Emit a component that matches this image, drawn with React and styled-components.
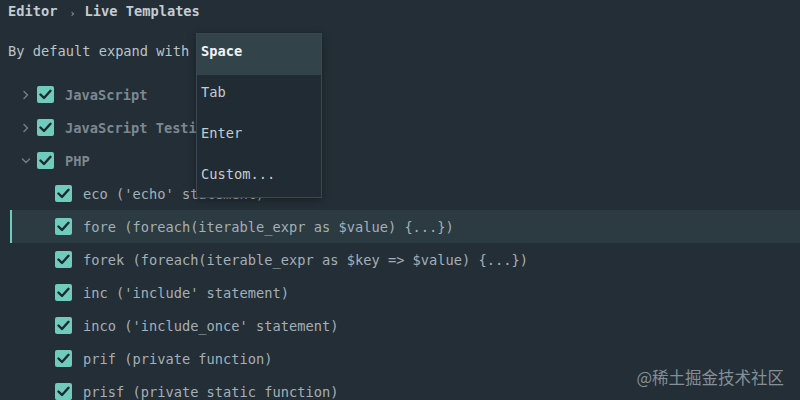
import React from "react";
import styled, { createGlobalStyle } from "styled-components";

const GlobalStyle = createGlobalStyle`
  html, body {
    margin: 0;
    padding: 0;
    background: #232e36;
  }
  body {
    font-family: "DejaVu Sans Mono", "Liberation Mono", monospace;
    font-size: 13.7px;
  }
`;

const Page = styled.div`
  position: relative;
  width: 800px;
  height: 400px;
  overflow: hidden;
  background: #232e36;
  color: #a9b3ba;
`;

const Breadcrumb = styled.div`
  display: flex;
  align-items: center;
  height: 22px;
  padding-left: 8px;
  font-weight: bold;
  color: #c3ccd2;
`;

const Sep = styled.span`
  margin: 0 9px 0 12px;
  font-size: 10px;
  color: #8d99a1;
  position: relative;
  top: 2px;
`;

const ExpandLine = styled.div`
  display: flex;
  align-items: center;
  height: 24px;
  margin-top: 17px;
  padding-left: 8px;
  color: #b9c3c9;
`;

const Tree = styled.div`
  margin-top: 15px;
`;

const Row = styled.div`
  display: flex;
  align-items: center;
  height: 33px;
  box-sizing: border-box;
  margin-left: 10px;
  padding-left: ${(p) => (p.$child ? 43 : 5)}px;
  border-left: 2px solid ${(p) => (p.$selected ? "#6fcbbb" : "transparent")};
  background: ${(p) => (p.$selected ? "#2c3a41" : "transparent")};
`;

const Chevron = styled.span`
  display: flex;
  width: 18px;
  justify-content: center;
  margin-right: 2px;
`;

const Box = styled.span`
  display: flex;
  align-items: center;
  justify-content: center;
  width: 17px;
  height: 17px;
  border-radius: 2px;
  background: #6fcbbb;
  margin-right: 11px;
`;

const Label = styled.span`
  white-space: pre;
  color: ${(p) => (p.$group ? "#7b8892" : "#a5afb6")};
  font-weight: ${(p) => (p.$group ? "bold" : "normal")};
`;

const Menu = styled.div`
  position: absolute;
  left: 196px;
  top: 33px;
  width: 126px;
  height: 165px;
  box-sizing: border-box;
  background: #202b33;
  border: 1px solid #3a4650;
  box-shadow: 0 2px 8px rgba(0, 0, 0, 0.3);
`;

const MenuItem = styled.div`
  height: 41px;
  box-sizing: border-box;
  display: flex;
  align-items: center;
  padding: 0 0 7px 4px;
  background: ${(p) => (p.$active ? "#33434a" : "transparent")};
  color: ${(p) => (p.$active ? "#eef3f5" : "#c4ccd1")};
  font-weight: ${(p) => (p.$active ? "bold" : "normal")};
`;

const Watermark = styled.div`
  position: absolute;
  right: 16px;
  bottom: 11px;
  font-family: "Noto Sans CJK SC", "Noto Sans", sans-serif;
  font-size: 16.5px;
  color: #848f96;
`;

const Check = () => (
  <svg width="13" height="11" viewBox="0 0 13 11">
    <path d="M1.5 5.5 L5 9 L11.5 1.8" fill="none" stroke="#1d2930" strokeWidth="2.4" strokeLinecap="round" strokeLinejoin="round" />
  </svg>
);

const Arrow = ({ open }) => (
  <svg width="10" height="10" viewBox="0 0 10 10">
    <path
      d={open ? "M1.5 3 L5 6.5 L8.5 3" : "M3 1.5 L6.5 5 L3 8.5"}
      fill="none"
      stroke="#6f7c86"
      strokeWidth="1.5"
      strokeLinecap="round"
      strokeLinejoin="round"
    />
  </svg>
);

const groups = [
  { name: "JavaScript", open: false },
  { name: "JavaScript Testing", open: false },
  { name: "PHP", open: true },
];

const templates = [
  "eco ('echo' statement)",
  "fore (foreach(iterable_expr as $value) {...})",
  "forek (foreach(iterable_expr as $key => $value) {...})",
  "inc ('include' statement)",
  "inco ('include_once' statement)",
  "prif (private function)",
  "prisf (private static function)",
];

export default function App() {
  return (
    <Page>
      <GlobalStyle />
      <Breadcrumb>
        Editor<Sep>›</Sep>Live Templates
      </Breadcrumb>
      <ExpandLine>By default expand with</ExpandLine>
      <Tree>
        {groups.map((g) => (
          <Row key={g.name}>
            <Chevron>
              <Arrow open={g.open} />
            </Chevron>
            <Box>
              <Check />
            </Box>
            <Label $group>{g.name}</Label>
          </Row>
        ))}
        {templates.map((t, i) => (
          <Row key={t} $child $selected={i === 1}>
            <Box>
              <Check />
            </Box>
            <Label>{t}</Label>
          </Row>
        ))}
      </Tree>
      <Menu>
        <MenuItem $active>Space</MenuItem>
        <MenuItem>Tab</MenuItem>
        <MenuItem>Enter</MenuItem>
        <MenuItem>Custom...</MenuItem>
      </Menu>
      <Watermark>@稀土掘金技术社区</Watermark>
    </Page>
  );
}
